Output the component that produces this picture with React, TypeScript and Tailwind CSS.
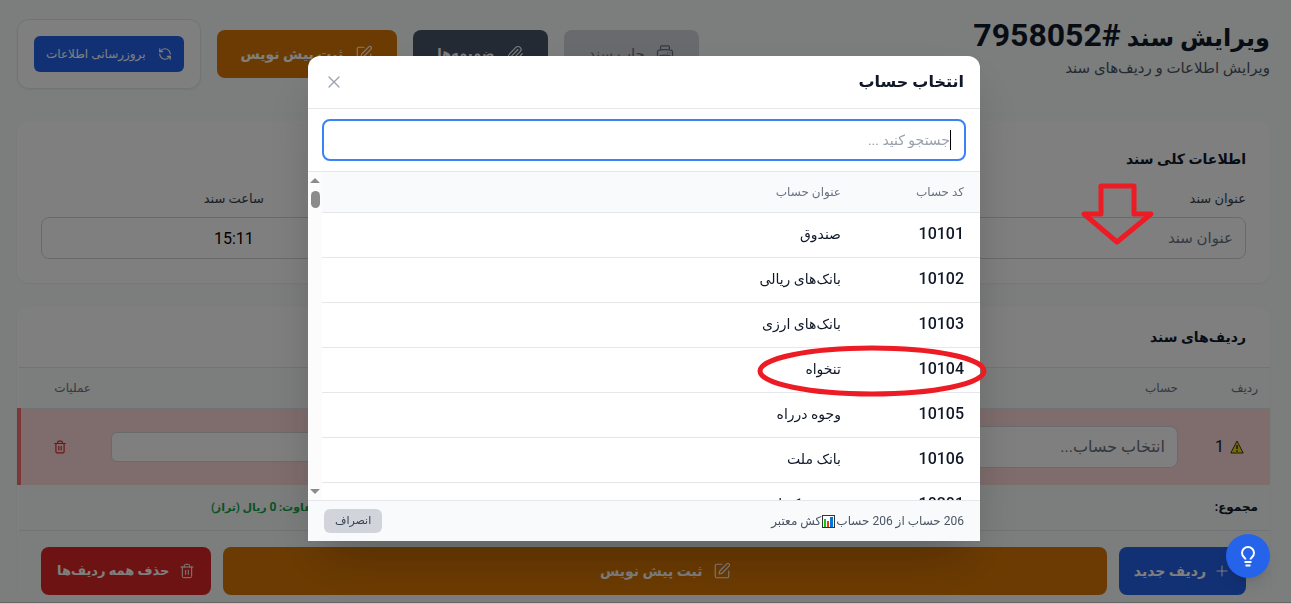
import { useState } from 'react';
import { Paperclip, RefreshCcw, SquarePen, Trash2 } from 'lucide-react';
import { HiOutlinePrinter, HiOutlinePlus, HiOutlineXMark } from 'react-icons/hi2';

const accounts = [
  { code: '10101', title: 'صندوق' },
  { code: '10102', title: 'بانک‌های ریالی' },
  { code: '10103', title: 'بانک‌های ارزی' },
  { code: '10104', title: 'تنخواه' },
  { code: '10105', title: 'وجوه درراه' },
  { code: '10106', title: 'بانک ملت' },
  { code: '10201', title: 'سپرده کوتاه مدت' },
];

function BulbIcon() {
  return (
    <svg viewBox="0 0 24 24" className="w-6 h-6" fill="none" stroke="currentColor" strokeWidth="2">
      <path d="M9.500 15.500c0-1.700-3.500-2.700-3.500-6.500a6 6 0 0 1 12 0c0 3.800-3.500 4.800-3.500 6.500M8.500 18h7M9.500 21.500h5" />
    </svg>
  );
}

function WarningIcon() {
  return (
    <svg viewBox="0 0 14 14" className="w-3.5 h-3.5">
      <path d="M7 1 13.200 13H.8z" fill="#f2d600" stroke="#333" strokeWidth="1" strokeLinejoin="round" />
      <path d="M7 5v4M7 10.200v1.500" stroke="#222" strokeWidth="1.400" />
    </svg>
  );
}

function ChartIcon() {
  return (
    <svg viewBox="0 0 13 13" className="w-[13px] h-[13px] mx-px">
      <rect x="0.5" y="0.5" width="12" height="12" fill="#fff" stroke="#333" />
      <rect x="2" y="4" width="2" height="8" fill="#16c60c" />
      <rect x="5" y="6" width="2" height="6" fill="#f03a17" />
      <rect x="8" y="2" width="3" height="10" fill="#0078d7" />
    </svg>
  );
}

function Header() {
  return (
    <header className="flex items-start justify-between pt-[19px]">
      <div>
        <h1 className="text-2xl leading-8 font-bold text-gray-900">
          ویرایش سند <span className="text-[32px] leading-8">#7958052</span>
        </h1>
        <p className="mt-1 text-gray-600 text-[15px] leading-5">ویرایش اطلاعات و ردیف‌های سند</p>
      </div>
      <div className="flex items-center gap-4">
        <button disabled className="h-12 px-6 rounded-lg bg-[#d1d5db] text-gray-500 text-[15px] flex items-center gap-2.5">
          <HiOutlinePrinter className="w-5 h-5" />
          چاپ سند
        </button>
        <button className="h-12 px-6 rounded-lg bg-[#475569] text-white font-bold text-[13px] flex items-center gap-3">
          <Paperclip className="w-[18px] h-[18px]" strokeWidth={1.5} />
          ضمیمه‌ها
        </button>
        <button className="h-12 px-6 rounded-lg bg-[#d97706] text-white font-bold text-sm flex items-center gap-3">
          <SquarePen className="w-[18px] h-[18px]" strokeWidth={1.5} />
          ثبت پیش نویس
        </button>
        <div className="bg-white border border-gray-200 rounded-xl shadow-xs p-4">
          <button className="h-9 px-3 rounded-md bg-[#2563eb] text-white text-xs flex items-center gap-3">
            <RefreshCcw className="w-3.5 h-3.5" strokeWidth={2} />
            بروزرسانی اطلاعات
          </button>
        </div>
      </div>
    </header>
  );
}

function GeneralInfo() {
  return (
    <section className="bg-white rounded-xl shadow-xs p-6 mt-8">
      <h2 className="text-sm leading-7 font-bold text-gray-900">اطلاعات کلی سند</h2>
      <div className="grid grid-cols-3 gap-6 mt-4">
        <div>
          <label htmlFor="title" className="block text-[13px] leading-5 text-gray-700 mb-2">عنوان سند</label>
          <input id="title" placeholder="عنوان سند" className="w-full h-[42px] px-3 border border-gray-300 rounded-lg text-[15px] placeholder:text-gray-500 outline-none" />
        </div>
        <div />
        <div className="text-center">
          <label htmlFor="time" className="block text-[13px] leading-5 text-gray-700 mb-2">ساعت سند</label>
          <input id="time" defaultValue="15:11" className="w-full h-[42px] px-3 border border-gray-300 rounded-lg text-center outline-none" />
        </div>
      </div>
    </section>
  );
}

function Rows() {
  return (
    <section className="bg-white rounded-xl shadow-xs mt-6">
      <h2 className="px-6 h-[60px] flex items-center text-sm font-bold text-gray-900">ردیف‌های سند</h2>
      <table className="w-full table-fixed text-right">
        <thead className="bg-[#f8fcfa] border-y border-gray-200 text-xs text-gray-500">
          <tr className="h-[41px]">
            <th className="w-20 px-3 font-medium">ردیف</th>
            <th className="px-3 font-medium">حساب</th>
            <th className="px-3" />
            <th className="w-[92px] pr-5 font-medium">عملیات</th>
          </tr>
        </thead>
        <tbody>
          <tr className="h-[76px] bg-[#ffdada]">
            <td className="pr-[26px]">
              <div className="flex items-center gap-1.5 text-gray-900">
                <WarningIcon />
                1
              </div>
            </td>
            <td className="pr-3">
              <input aria-label="حساب" placeholder="انتخاب حساب..." className="w-full h-[42px] px-3 bg-white border border-gray-300 rounded-lg text-base placeholder:text-gray-500" />
            </td>
            <td>
              <input aria-label="شرح" className="w-full h-[30px] px-2 bg-white border border-gray-300 rounded-md" />
            </td>
            <td className="pr-11 border-l-4 border-[#f87171]">
              <button aria-label="حذف" className="block text-[#dc2626]">
                <Trash2 className="w-3.5 h-3.5" />
              </button>
            </td>
          </tr>
        </tbody>
        <tfoot className="bg-[#f8fcfa] border-b border-gray-200">
          <tr className="h-[46px] text-xs font-bold">
            <td colSpan={2} className="px-3 text-gray-900">مجموع:</td>
            <td colSpan={2} className="pl-48 text-left text-[11px] text-[#16a34a]">
              تفاوت: <span className="text-xs">0</span> ریال (تراز)
            </td>
          </tr>
        </tfoot>
      </table>
      <div className="flex gap-3 px-6 pt-4 pb-2 bg-[#f8fcfa] text-white font-bold text-sm">
        <button className="h-12 w-[127px] px-4 rounded-lg bg-[#2563eb] flex items-center gap-2 whitespace-nowrap">
          <HiOutlinePlus className="w-4 h-4 shrink-0" />
          ردیف جدید
        </button>
        <button className="h-12 flex-1 rounded-lg bg-[#d97706] flex items-center justify-center gap-2.5">
          <SquarePen className="w-[18px] h-[18px]" strokeWidth={1.5} />
          ثبت پیش نویس
        </button>
        <button className="h-12 px-4 rounded-lg bg-[#dc2626] text-[13px] flex items-center gap-2.5">
          <Trash2 className="w-4 h-4" strokeWidth={1.5} />
          حذف همه ردیف‌ها
        </button>
      </div>
    </section>
  );
}

function AccountModal() {
  const [query, setQuery] = useState('');

  return (
    <div className="fixed inset-0 bg-black/50 flex items-start justify-center pt-14 pr-[3px]">
      <div role="dialog" aria-label="انتخاب حساب" className="w-full max-w-2xl bg-white rounded-t-xl shadow-2xl">
        <div className="flex items-center justify-between px-4 h-[53px] border-b border-gray-200">
          <h3 className="text-base font-bold text-gray-900">انتخاب حساب</h3>
          <button aria-label="بستن" className="text-gray-400 hover:text-gray-600">
            <HiOutlineXMark className="w-5 h-5" />
          </button>
        </div>
        <div className="relative px-3.5 py-2.5 border-b border-gray-200">
          <input
            autoFocus
            aria-label="جستجو"
            value={query}
            onChange={(e) => setQuery(e.target.value)}
            placeholder="جستجو کنید ..."
            className="block w-full h-[42px] px-3.5 border-2 border-[#3b82f6] rounded-lg text-sm placeholder:text-gray-400 outline-none caret-transparent"
          />
          {!query && <span className="absolute right-[29px] top-[21px] w-px h-5 bg-black" />}
        </div>

        <div className="flex h-[328px] overflow-hidden">
          <table className="flex-1 text-right self-start">
            <thead className="bg-[#f8fafc] text-xs text-gray-500">
              <tr className="h-10 border-b border-gray-200">
                <th className="w-[123px] pr-4 font-medium">کد حساب</th>
                <th className="pr-4 font-medium">عنوان حساب</th>
              </tr>
            </thead>
            <tbody>
              {accounts.map((a) => (
                <tr key={a.code} className="h-[45px] border-b border-gray-200 text-gray-900">
                  <td className="pr-4 pb-0.5 font-medium">{a.code}</td>
                  <td className="pr-4 pb-0.5 text-sm">{a.title}</td>
                </tr>
              ))}
            </tbody>
          </table>
          {/* scrollbar */}
          <div className="w-3.5 bg-[#fcfcfc] flex flex-col items-center justify-between py-1.5">
            <div className="flex flex-col items-center gap-2">
              <svg viewBox="0 0 10 5" className="w-2.5 h-[5px]"><path d="M0 5 5 0l5 5z" fill="#8b8b8b" /></svg>
              <div className="w-[9px] h-[17px] rounded-full bg-[#8b8b8b]" />
            </div>
            <svg viewBox="0 0 10 5" className="w-2.5 h-[5px]"><path d="M0 0 5 5l5-5z" fill="#8b8b8b" /></svg>
          </div>
        </div>

        <div className="flex items-center justify-between px-4 h-[41px] bg-[#f8fafc] border-t border-gray-200 text-xs text-gray-600">
          <p className="flex items-center">
            <span>206 حساب از 206 حساب</span>
            <ChartIcon />
            <span>کش معتبر</span>
          </p>
          <button className="h-6 px-[11px] rounded-md bg-[#d1d5db] text-gray-700 text-[11px]">انصراف</button>
        </div>
      </div>
    </div>
  );
}

export default function App() {
  return (
    <div dir="rtl" className="h-screen overflow-hidden bg-[#f8fcfa] font-[Roboto,'DejaVu_Sans',sans-serif]">
      <main className="pl-[17px] pr-[21px]">
        <Header />
        <GeneralInfo />
        <Rows />
      </main>
      <AccountModal />

      <button aria-label="راهنما" className="fixed right-[21px] bottom-[26px] w-11 h-11 rounded-full bg-[#2563eb] text-white shadow-lg flex items-center justify-center">
        <BulbIcon />
      </button>

      {/* bottom window edge */}
      <div className="fixed inset-x-0 bottom-0 h-0.5 border-t border-[#666] bg-[#c8c8c8]" />

      {/* hand-drawn marks over the page */}
      <svg className="absolute left-[1080px] top-[182px] w-[76px] h-[66px]" viewBox="0 0 76 66" fill="none" stroke="#ed1c24" strokeWidth="5" strokeLinejoin="round">
        <path d="M21 4h33v28h17L37 60 4 32h17z" />
      </svg>
      <svg className="absolute left-[756px] top-[343px] w-[232px] h-[56px]" viewBox="0 0 232 56" fill="none" stroke="#ed1c24" strokeWidth="5">
        <ellipse cx="116" cy="28" rx="112" ry="23" />
      </svg>
    </div>
  );
}
